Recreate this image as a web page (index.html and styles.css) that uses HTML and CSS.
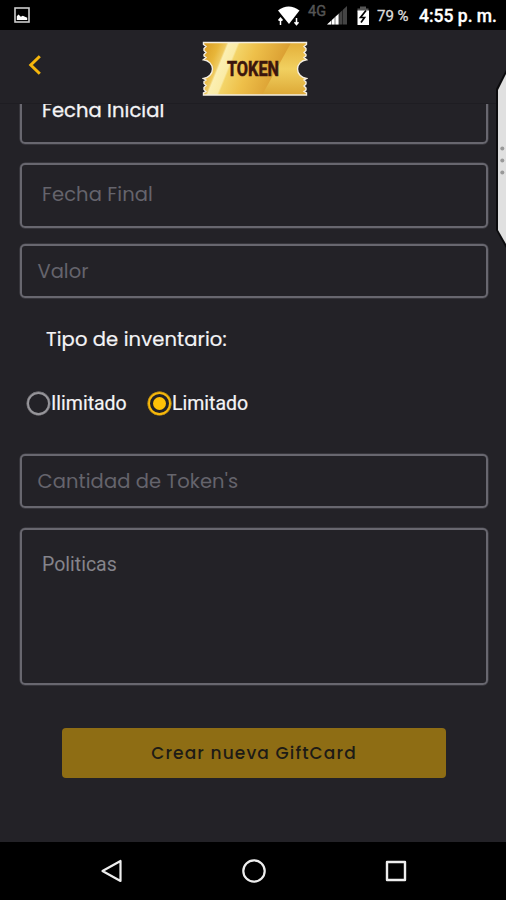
FILE: index.html
```html
<!DOCTYPE html>
<html lang="es">
<head>
<meta charset="utf-8">
<title>Crear GiftCard</title>
<link rel="stylesheet" href="styles.css">
</head>
<body>
<div class="phone">
  <div class="status">
    <svg class="shot" width="16" height="16" viewBox="0 0 16 16"><rect x="1" y="1" width="14" height="14" fill="none" stroke="#ccc" stroke-width="1.6"/><path d="M2.800 13V9.300L4.500 7.500l2.300 2.200 2-1 4.400 2.100V13z" fill="#fff"/></svg>
    <svg class="signals" width="98" height="30" viewBox="0 0 98 30">
      <path d="M2 10.500Q12.500 2.500 23.500 10.500L13 24Z" fill="#fff"/>
      <path d="M4.500 25v-6M2.500 20.500l2-2.300 2 2.300M20.500 18v6M18.500 22.200l2 2.300 2-2.300" fill="none" stroke="#000" stroke-width="3.600"/>
      <path d="M4.500 25v-6M2.500 20.500l2-2.300 2 2.300M20.500 18v6M18.500 22.200l2 2.300 2-2.300" fill="none" stroke="#fff" stroke-width="1.500"/>
      <text class="net" x="32" y="15.500">4G</text>
      <path d="M51 24.500L71 6v18.500z" fill="#444"/>
      <path d="M51 24.500L63 13.400v11.100z" fill="#fff"/>
      <path d="M55.500 20v5M59 17v8M62.800 12v13M66.500 9v16" stroke="#000" stroke-width=".5"/>
      <path d="M84 6.500h6v2h2.500V12h-11V8.500H84z" fill="#555"/>
      <path d="M81.500 10.500h11.500v14.500H81.500z" fill="#fff"/>
      <path d="M90 10.500l-5.500 7h4L85 22.500" fill="none" stroke="#000" stroke-width="1.700"/>
    </svg>
    <span class="percent">79 %</span>
    <span class="clock">4:55 p. m.</span>
  </div>
  <header class="header">
    <svg class="back" width="16" height="22" viewBox="0 0 16 22"><path d="M12.800 2.200L3.800 11l9 8.800" fill="none" stroke="#f5b60c" stroke-width="3"/></svg>
    <svg class="ticket" width="106" height="56" viewBox="0 0 106 56">
      <defs>
        <linearGradient id="gold" gradientUnits="userSpaceOnUse" x1="-8" y1="14" x2="80" y2="50">
          <stop offset="0" stop-color="#d4931a"/><stop offset=".2" stop-color="#e8b63a"/><stop offset=".27" stop-color="#efcb62"/><stop offset=".29" stop-color="#fbefb2"/><stop offset=".38" stop-color="#faeba6"/><stop offset=".4" stop-color="#f3d468"/><stop offset=".58" stop-color="#eec04a"/><stop offset="1" stop-color="#d4942a"/>
        </linearGradient>
        <linearGradient id="edge" x1="0" y1="0" x2="0" y2="1"><stop offset="0" stop-color="#e2ad37"/><stop offset=".5" stop-color="#f1d060"/><stop offset="1" stop-color="#dba533"/></linearGradient>
        <clipPath id="shape"><path id="outline" d="M1.500 1.500H104.500V3.500L102 5.500l2 2V9.500l-2 2 2 2V15l-2 1.500 2.500 2.200A10.500 9.500 0 0 0 104.500 37.500l-2.500 1.500 2 2v2l-2 2 2 2v2l-2 1.500 2.500 1.500V54H1.500V52L4 50.500l-2-2v-2l2-2-2-2v-2l2-1.500-2.500-1.500A10.500 9.500 0 0 0 1.500 18.700L4 16.500 2 15v-1.500l2-2-2-2v-2l2-2L1.500 3.500Z"/></clipPath>
      </defs>
      <g clip-path="url(#shape)">
        <rect width="106" height="56" fill="url(#gold)"/>
        <path d="M90 0h17v56H59z" fill="url(#edge)"/>
      </g>
      <use href="#outline" fill="none" stroke="#f4eee0" stroke-width="1.400"/>
      <text class="brand" x="25" y="35" textLength="52" lengthAdjust="spacingAndGlyphs">TOKEN</text>
    </svg>
  </header>
  <main class="form">
    <div class="field date first"><span class="t-initial">Fecha Inicial</span></div>
    <div class="field date final"><span class="t-final">Fecha Final</span></div>
    <div class="field line value"><span>Valor</span></div>
    <p class="label"><span class="t-type">Tipo de inventario:</span></p>
    <div class="radios">
      <div class="option"><i class="radio"></i><span>Ilimitado</span></div>
      <div class="option"><i class="radio on"></i><span>Limitado</span></div>
    </div>
    <div class="field line amount"><span>Cantidad de Token's</span></div>
    <div class="field policies"><span>Politicas</span></div>
    <div class="submit"><span>Crear nueva GiftCard</span></div>
  </main>
  <nav class="nav">
    <svg width="24" height="26" viewBox="0 0 24 26"><path d="M20.500 3v20L2.500 13z" fill="none" stroke="#eee" stroke-width="2.200" stroke-linejoin="round"/></svg>
    <svg width="26" height="26" viewBox="0 0 26 26"><circle cx="13" cy="13" r="10.700" fill="none" stroke="#eee" stroke-width="2.200"/></svg>
    <svg width="24" height="26" viewBox="0 0 24 26"><rect x="3" y="4" width="18" height="18" fill="none" stroke="#eee" stroke-width="2.400" stroke-linejoin="round"/></svg>
  </nav>
  <svg class="handle" width="10" height="180" viewBox="0 0 10 180"><path d="M10 0v178L0 160V19z" fill="#0b0b0d"/><path d="M10 4v170L2 160V20z" fill="#e0e0e0"/><g fill="#999"><circle cx="6.300" cy="78.500" r="2"/><circle cx="6.300" cy="90.500" r="2"/><circle cx="6.300" cy="102.500" r="2"/></g></svg>
</div>
</body>
</html>
```
FILE: styles.css
```css
* { box-sizing: border-box; }
body { margin: 0; background: #232227; }
.phone {
  position: relative;
  width: 506px;
  height: 900px;
  display: flex;
  flex-direction: column;
  overflow: hidden;
  background: #232227;
  color: #f4f4f6;
  font-family: Poppins, Inter, sans-serif;
  white-space: nowrap;
}
.status {
  flex: 0 0 30px;
  display: flex;
  align-items: center;
  background: #000;
  padding: 0 9px 0 14px;
  font-family: Roboto, sans-serif;
}
.signals { margin-left: auto; }
.net { font: 14.5px Roboto, sans-serif; fill: #555; stroke: #555; stroke-width: .4px; }
.percent { width: 32px; margin-left: 3px; font-size: 15px; color: #ddd; -webkit-text-stroke: .3px #ddd; padding-top: 2px; }
.clock { width: 78px; margin-left: 10px; font-size: 17.5px; font-weight: 500; color: #fff; padding-top: 2px; -webkit-text-stroke: .3px #fff; }
.header {
  flex: 0 0 74px;
  display: grid;
  grid-template-columns: 202px 106px 1fr;
  align-items: start;
  border-bottom: 1px solid #1e1d22;
}
.back { margin: 24px 0 0 27px; }
.ticket { margin-top: 11px; }
.brand { font: 700 21px Roboto, sans-serif; fill: #3b150d; stroke: #3b150d; stroke-width: .6px; }
.form { flex: 1; overflow: hidden; padding: 0 18px 0 20px; }
.field {
  display: flex;
  align-items: center;
  border: 2px solid #68676f;
  border-radius: 5px;
  box-shadow: 0 0 0 .5px #4a4950;
  color: #65646c;
  font-size: 19.5px;
}
.date { height: 65px; padding: 0 0 2px 20px; }
.first { margin-top: -25px; color: #f4f4f6; }
.final { margin-top: 19px; }
.line { height: 54px; padding: 1px 0 0 15.5px; }
.value { margin-top: 16px; }
.t-initial { letter-spacing: .08px; -webkit-text-stroke: .3px; }
.t-final { letter-spacing: .12px; }
.label { margin: 28px 0 0 26px; height: 28px; line-height: 28px; font-size: 19.5px; }
.t-type { letter-spacing: .12px; -webkit-text-stroke: .2px; }
.radios { display: flex; gap: 21px; margin: 36px 0 0 7px; height: 27px; }
.option { display: flex; align-items: center; font-family: Roboto, sans-serif; font-size: 19.5px; -webkit-text-stroke: .2px; }
.option span { width: 76px; }
.radio {
  display: flex;
  align-items: center;
  justify-content: center;
  width: 23px;
  height: 23px;
  margin-right: 1px;
  border: 2px solid #96959a;
  border-radius: 50%;
  box-shadow: 0 0 0 .4px #96959a;
}
.on { border-color: #f8b90b; box-shadow: 0 0 0 .5px #f8b90b; }
.on::after { content: ""; width: 13px; height: 13px; border-radius: 50%; background: #ffc107; }
.amount { margin-top: 37px; letter-spacing: .1px; }
.policies { height: 157px; margin-top: 20px; padding: 22px 0 0 20px; align-items: flex-start; font: 19.5px/26px Roboto, sans-serif; color: #85848b; }
.submit {
  display: flex;
  align-items: center;
  justify-content: center;
  width: 384px;
  height: 50px;
  margin: 43px 0 0 42px;
  border-radius: 4px;
  background: #8e6d14;
  color: #1d1b16;
  font-size: 17px;
  font-weight: 500;
  letter-spacing: 1.12px;
}
.nav {
  flex: 0 0 58px;
  display: flex;
  align-items: center;
  justify-content: space-between;
  padding: 0 98px 0 100px;
  background: #000;
}
.handle { position: absolute; right: 0; top: 70px; }
```
